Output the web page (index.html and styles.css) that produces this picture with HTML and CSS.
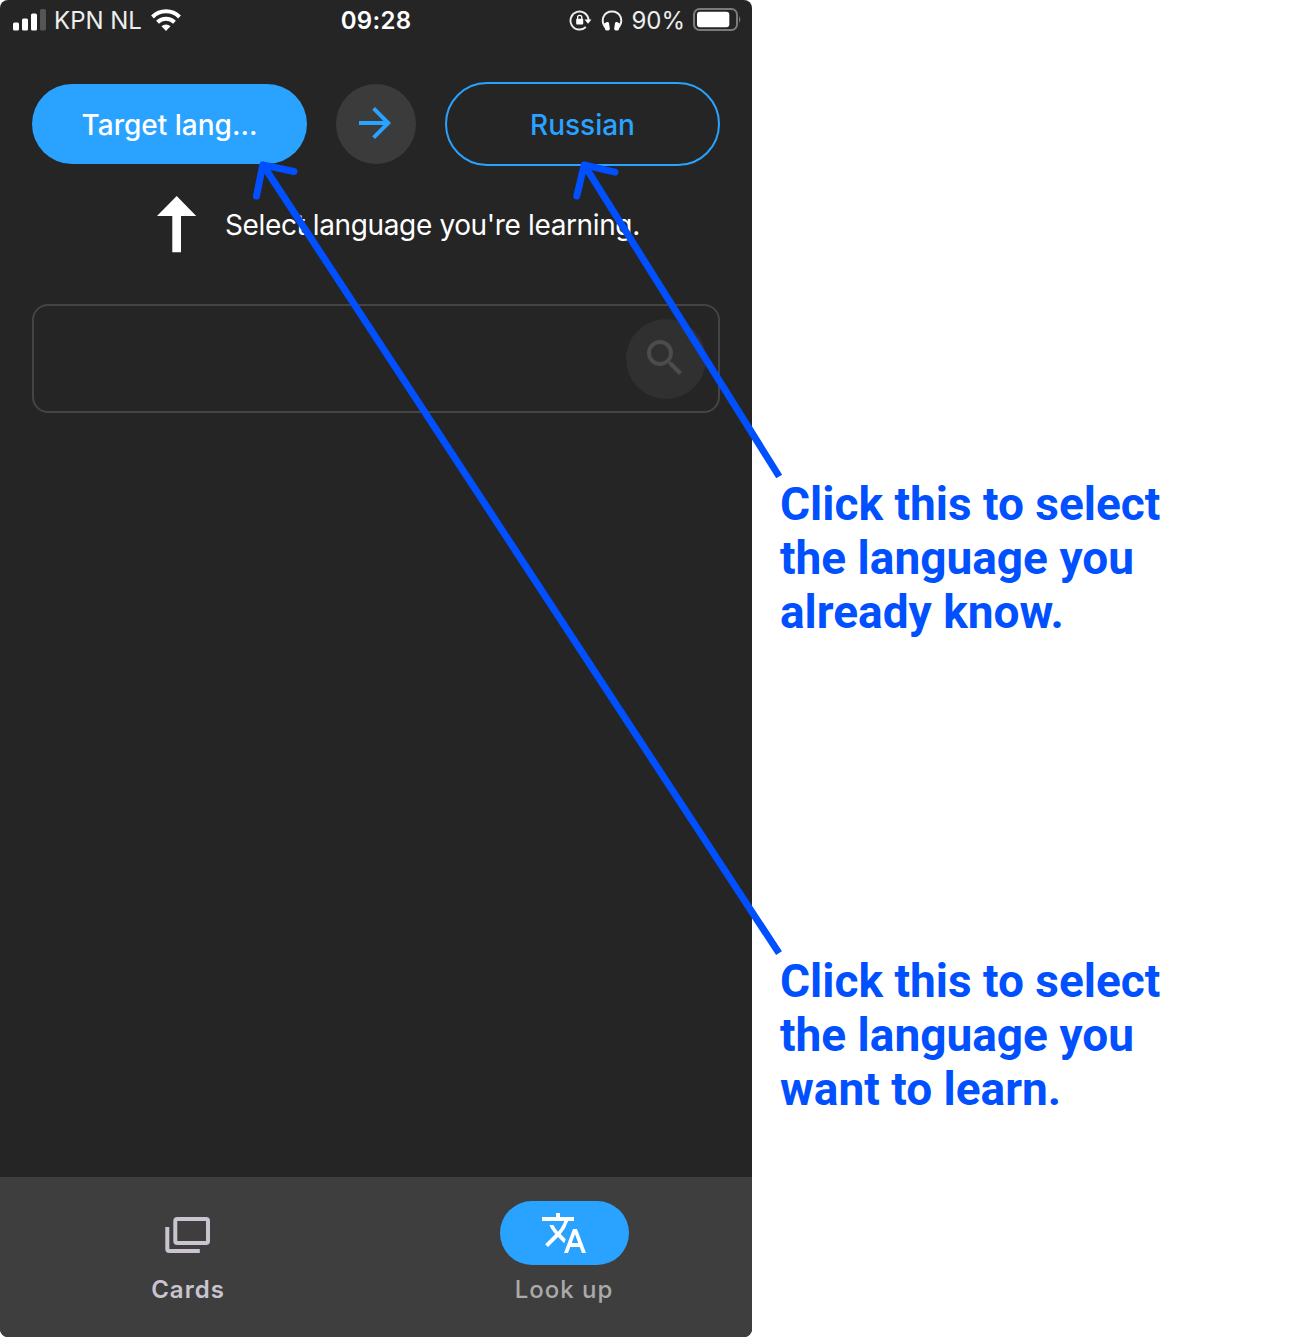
FILE: index.html
```html
<!DOCTYPE html>
<html lang="en">
<head>
<meta charset="utf-8">
<title>Language selection guide</title>
<link rel="stylesheet" href="styles.css">
</head>
<body>
<div class="guide">
  <main class="phone">
    <header class="status">
      <div class="status-left">
        <svg width="34" height="22" viewBox="0 0 34 22" fill="#fff"><rect y="13.5" width="6" height="8" rx="1.5"/><rect x="9" y="9.500" width="6" height="12" rx="1.500"/><rect x="18" y="4.500" width="6" height="17" rx="1.500"/><rect x="27" y="0" width="6" height="21.500" rx="1.500" fill="#555"/></svg>
        <span class="carrier">KPN NL</span>
        <svg class="wifi" width="32" height="24" viewBox="0 0 32 24" fill="none" stroke="#fff" stroke-width="4"><path d="M2.500 9a19 19 0 0 1 27 0M7.500 14.300a12.200 12.200 0 0 1 17 0"/><path d="M16 23l-4.500-4.700a6.500 6.500 0 0 1 9 0z" fill="#fff" stroke="none"/></svg>
      </div>
      <span class="clock">09:28</span>
      <div class="status-right">
        <svg width="24" height="24" viewBox="0 0 24 24"><path d="M16.800 19a9 9 0 1 1 2.700-7" fill="none" stroke="#eee" stroke-width="1.900"/><path d="M15.500 11.500h7L19 15.700z" fill="#fff"/><rect x="7.200" y="10.800" width="7" height="5.700" rx=".8" fill="#fff"/><path d="M8.600 11V9.500a2.100 2.100 0 0 1 4.200 0V11" fill="none" stroke="#fff" stroke-width="1.300"/></svg>
        <svg class="phones" width="22" height="24" viewBox="0 0 22 24"><path d="M4.200 19.500C-1.200 12 3 3.500 11 3.500S23.200 12 17.800 19.500" fill="none" stroke="#eee" stroke-width="2"/><path d="M3 15.500l3-1.500q1.500-.3 2 1l.8 5.500q0 2-1.500 2H5.800q-1.300 0-1.700-1zM19 15.500L16 14q-1.500-.3-2 1l-.8 5.500q0 2 1.500 2h1.500q1.300 0 1.700-1z" fill="#fff"/></svg>
        <span class="percent">90%</span>
        <svg class="battery" width="48" height="24" viewBox="0 0 48 24"><rect x="1" y="1" width="43" height="21" rx="5.500" fill="none" stroke="#7b7b7b" stroke-width="2"/><rect x="4" y="3.800" width="32.300" height="15.400" rx="3" fill="#fff"/><path d="M46.200 8q2.200 3.500 0 7z" fill="#888"/></svg>
      </div>
    </header>

    <section class="languages">
      <button class="lang target">Target lang...</button>
      <div class="swap"><svg width="48" height="48" viewBox="0 0 24 24" fill="#29a3ff"><path d="M12 4l-1.410 1.410L16.170 11H4v2h12.170l-5.580 5.590L12 20l8-8z"/></svg></div>
      <button class="lang source">Russian</button>
    </section>

    <section class="hint">
      <svg width="40" height="57" viewBox="0 0 40 57" fill="#fff"><path d="M19.700 0l19.500 20H24v36.200h-8.700V20H0z"/></svg>
      <p class="hint-text">Select language you're learning.</p>
    </section>

    <section class="search">
      <div class="search-button"><svg width="48" height="48" viewBox="0 0 24 24" fill="#4c4c4c"><path d="M15.500 14h-.79l-.28-.27A6.471 6.471 0 0 0 16 9.500 6.500 6.500 0 1 0 9.500 16c1.610 0 3.090-.59 4.230-1.570l.27.28v.79l5 4.990L20.490 19l-4.990-5zm-6 0C7.010 14 5 11.990 5 9.500S7.010 5 9.500 5 14 7.010 14 9.500 11.990 14 9.500 14z"/></svg></div>
    </section>

    <nav class="tabs">
      <div class="tab cards">
        <div class="tab-icon"><svg width="48" height="48" viewBox="0 0 48 48" fill="none" stroke="#cac4d0" stroke-width="4"><rect x="11.300" y="10" width="32.700" height="24" rx="2"/><path d="M3.300 18v22q0 2 2 2h30.500"/></svg></div>
        <span class="tab-label">Cards</span>
      </div>
      <div class="tab lookup">
        <div class="tab-icon selected"><svg width="48" height="48" viewBox="0 0 24 24" fill="#fff"><path d="M12.870 15.070l-2.540-2.510.03-.03A17.520 17.520 0 0 0 14.070 6H17V4h-7V2H8v2H1v2h11.170C11.500 7.920 10.440 9.750 9 11.350 8.070 10.320 7.300 9.190 6.690 8h-2c.73 1.630 1.730 3.170 2.980 4.560l-5.090 5.020L4 19l5-5 3.110 3.110.76-2.040zM18.500 10h-2L12 22h2l1.120-3h4.750L21 22h2l-4.500-12zm-2.620 7l1.620-4.330L19.120 17h-3.240z"/></svg></div>
        <span class="tab-label">Look up</span>
      </div>
    </nav>
  </main>

  <aside class="notes">
    <p class="note">Click this to select<br>the language you<br>already know.</p>
    <p class="note">Click this to select<br>the language you<br>want to learn.</p>
  </aside>

  <svg class="arrows" viewBox="0 0 1300 1337">
    <path d="M779 953.200L263 165M779.200 476.500L584.300 165"/>
    <path class="head" d="M294 171.500L262.800 164.800L256.500 196M615 172.200L584.200 164.800L576.800 196"/>
  </svg>
</div>
</body>
</html>
```
FILE: styles.css
```css
* { box-sizing: border-box; }
body { margin: 0; background: #fff; font-family: Inter, "Liberation Sans", sans-serif; }
p { margin: 0; }
svg { display: block; flex: none; }
.guide { position: relative; display: flex; width: 1300px; height: 1337px; overflow: hidden; }
.phone { display: flex; flex-direction: column; width: 752px; height: 1337px; background: #252525; border-radius: 8px; overflow: hidden; }

.status { display: grid; grid-template-columns: 1fr auto 1fr; align-items: center; height: 40px; padding: 0 11px 0 13px; color: #eee; font-size: 24px; line-height: 38px; white-space: nowrap; }
.status-left, .status-right { display: flex; align-items: center; height: 40px; }
.status-right { justify-content: flex-end; }
.carrier { width: 103px; padding: 2px 0 0 7px; }
.clock { padding-top: 2px; margin-left: -2px; color: #fff; font-weight: 600; letter-spacing: 0.3px; }
.phones { margin-left: 8px; }
.percent { padding-top: 2px; margin-left: 8px; }
.battery { margin-left: 8px; }

.languages { display: flex; align-items: center; justify-content: space-between; height: 84px; margin: 42px 32px 0; }
.lang { width: 275px; height: 80px; padding: 2px 0 0; border: 0; border-radius: 42px; font: 500 28px/78px Inter, sans-serif; }
.target { color: #fff; background: #29a3ff; }
.source { height: 84px; color: #29a3ff; background: transparent; border: 2px solid #29a3ff; }
.swap { display: flex; align-items: center; justify-content: center; width: 80px; height: 80px; padding: 0 2px 2px 0; border-radius: 50%; background: #3b3b3b; }

.hint { display: flex; align-items: center; gap: 28px; height: 57px; margin: 30px 0 0 157px; color: #fff; }
.hint-text { font-size: 28px; line-height: 56px; letter-spacing: -0.37px; white-space: nowrap; }

.search { display: flex; align-items: center; justify-content: flex-end; height: 109px; margin: 51px 32px 0; padding-right: 12px; border: 2px solid #444; border-radius: 16px; }
.search-button { display: flex; align-items: center; justify-content: center; width: 80px; height: 80px; padding: 0 2px 2px 0; border-radius: 50%; background: #303030; }

.tabs { display: grid; grid-template-columns: 1fr 1fr; height: 160px; margin-top: auto; background: #3e3e3e; }
.tab { display: flex; flex-direction: column; align-items: center; padding-top: 24px; }
.tab-icon { display: flex; align-items: center; justify-content: center; width: 129px; height: 64px; border-radius: 32px; }
.selected { background: #29a3ff; }
.tab-label { margin-top: 9px; font-size: 24px; line-height: 32px; font-weight: 500; letter-spacing: 1px; }
.cards .tab-label { color: #cac4d0; font-weight: 600; }
.lookup .tab-label { color: #aaa; }

.notes { display: flex; flex-direction: column; gap: 315px; padding: 477px 0 0 28px; }
.note { color: #0050ff; font: 700 46px/54px Roboto, sans-serif; white-space: nowrap; }

.arrows { position: absolute; inset: 0; width: 1300px; height: 1337px; fill: none; stroke: #0050ff; stroke-width: 7; pointer-events: none; }
.head { stroke-linecap: round; stroke-linejoin: round; }
```
